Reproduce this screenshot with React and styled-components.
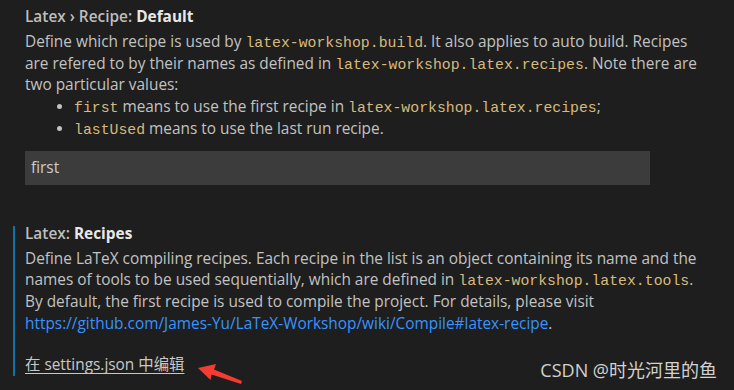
import React from "react";
import styled, { createGlobalStyle } from "styled-components";

const Global = createGlobalStyle`
  html, body { margin: 0; padding: 0; background: #1e1e1e; }
  body { width: 734px; height: 390px; overflow: hidden; }
`;

const Page = styled.div`
  position: relative;
  width: 734px;
  height: 390px;
  background: #1e1e1e;
  font-family: "Open Sans", "Noto Sans CJK SC", sans-serif;
  font-size: 15.4px;
  color: #c2c2c2;
  overflow: hidden;
  padding-top: 9px;
  box-sizing: border-box;
`;

const Setting = styled.section`
  margin-left: 13px;
  padding-left: 10px;
  border-left: 2px solid ${(p) => (p.$focused ? "#0e74a8" : "transparent")};
  margin-top: ${(p) => p.$mt || 0}px;
`;

const Title = styled.div`
  font-weight: 600;
  color: #bdbdbd;
  line-height: 16px;
  height: 16px;
  margin-bottom: 6px;
  white-space: nowrap;
`;

const Strong = styled.span`
  color: #e8e8e8;
  font-weight: 700;
`;

const Desc = styled.div`
  line-height: 21.7px;
  white-space: nowrap;
`;

const Code = styled.code`
  font-family: "Liberation Mono", "DejaVu Sans Mono", monospace;
  font-size: 14.8px;
  line-height: 1;
  color: #d7ba7d;
`;

const List = styled.ul`
  margin: 0;
  padding-left: 49px;
  list-style: none;
`;

const Item = styled.li`
  position: relative;
  line-height: 21.7px;
  white-space: nowrap;
  &::before {
    content: "";
    position: absolute;
    left: -17px;
    top: 8px;
    width: 5px;
    height: 5px;
    border-radius: 50%;
    background: #c2c2c2;
  }
`;

const Input = styled.div`
  margin-top: 11px;
  width: 625px;
  height: 34px;
  box-sizing: border-box;
  background: #3c3c3c;
  color: #cccccc;
  padding-left: 6px;
  line-height: 34px;
`;

const Link = styled.a`
  color: #3794ff;
  text-decoration: none;
`;

const EditLink = styled.a`
  display: inline-block;
  margin-top: 20px;
  color: #c8c8c8;
  text-decoration: underline;
  text-underline-offset: 3px;
  line-height: 22px;
  vertical-align: top;
`;

const Watermark = styled.div`
  position: absolute;
  right: 17px;
  bottom: 8px;
  font-family: "Open Sans", "Noto Sans CJK SC", sans-serif;
  font-size: 18px;
  color: #d2d2d2;
  white-space: nowrap;
`;

const Arrow = styled.svg`
  position: absolute;
  left: 0;
  top: 0;
  pointer-events: none;
`;

export default function App() {
  return (
    <Page>
      <Global />
      <Setting>
        <Title>
          Latex › Recipe: <Strong>Default</Strong>
        </Title>
        <Desc>
          Define which recipe is used by <Code>latex-workshop.build</Code>. It also applies to auto build. Recipes
          <br />
          are refered to by their names as defined in <Code>latex-workshop.latex.recipes</Code>. Note there are
          <br />
          two particular values:
        </Desc>
        <List>
          <Item>
            <Code>first</Code> means to use the first recipe in <Code>latex-workshop.latex.recipes</Code>;
          </Item>
          <Item>
            <Code>lastUsed</Code> means to use the last run recipe.
          </Item>
        </List>
        <Input>first</Input>
      </Setting>
      <Setting $focused $mt={41}>
        <Title>
          Latex: <Strong>Recipes</Strong>
        </Title>
        <Desc>
          Define LaTeX compiling recipes. Each recipe in the list is an object containing its name and the
          <br />
          names of tools to be used sequentially, which are defined in <Code>latex-workshop.latex.tools</Code>.
          <br />
          By default, the first recipe is used to compile the project. For details, please visit
          <br />
          <Link>https://github.com/James-Yu/LaTeX-Workshop/wiki/Compile#latex-recipe</Link>.
        </Desc>
        <EditLink>在 settings.json 中编辑</EditLink>
      </Setting>
      <Watermark>CSDN @时光河里的鱼</Watermark>
      <Arrow width="734" height="390" viewBox="0 0 734 390">
        <polygon
          points="198,368 216,364 214,369.5 242,381 241,384 211.5,374.5 210.5,380"
          fill="#f53b32"
        />
      </Arrow>
    </Page>
  );
}
